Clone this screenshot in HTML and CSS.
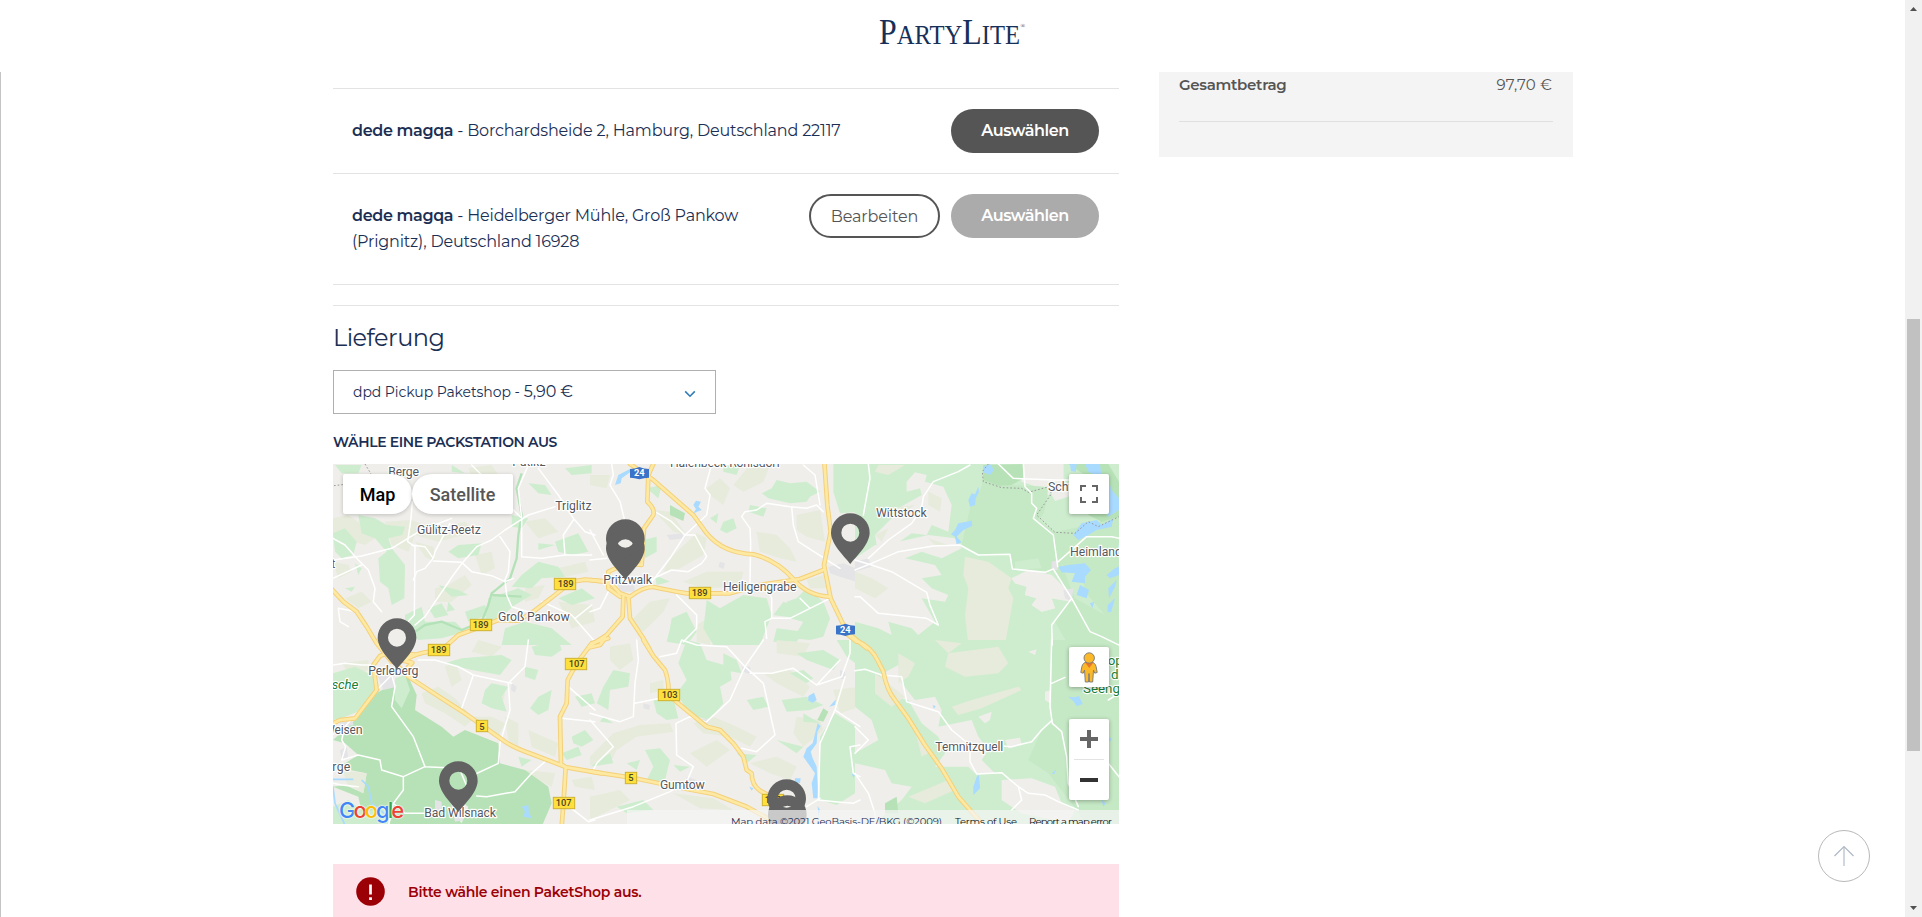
FILE: index.html
```html
<!DOCTYPE html>
<html lang="de">
<head>
<meta charset="utf-8">
<title>PartyLite</title>
<link rel="stylesheet" href="styles.css">
</head>
<body>
<div class="window">
  <div class="page">
    <header class="header">
      <svg class="logo" width="150" height="42" viewBox="0 0 150 42" role="img" aria-label="PartyLite">
        <text x="0" y="34.500" textLength="141" lengthAdjust="spacingAndGlyphs"><tspan class="logo-big">P</tspan><tspan>ARTY</tspan><tspan class="logo-big">L</tspan><tspan>ITE</tspan></text>
        <text class="logo-reg" x="141.500" y="19">®</text>
      </svg>
    </header>
    <div class="content">
      <main class="main">
        <ul class="addresses">
          <li class="address">
            <p class="address-text"><b>dede magqa</b> - Borchardsheide 2, Hamburg, Deutschland 22117</p>
            <button class="btn btn-dark">Auswählen</button>
          </li>
          <li class="address address-tall">
            <p class="address-text"><b>dede magqa</b> - Heidelberger Mühle, Groß Pankow<br>(Prignitz), Deutschland 16928</p>
            <button class="btn btn-outline">Bearbeiten</button>
            <button class="btn btn-muted">Auswählen</button>
          </li>
        </ul>
        <section class="delivery">
          <h2>Lieferung</h2>
          <div class="select">
            <span class="select-name">dpd Pickup Paketshop -</span><span class="select-price">5,90 €</span>
            <svg class="chevron" width="12" height="8" viewBox="0 0 12 8"><path d="M1.2 1.4L6 6.2l4.800-4.800"/></svg>
          </div>
          <h3>WÄHLE EINE PACKSTATION AUS</h3>
          <div class="map">
            <svg class="map-canvas" width="786" height="360" viewBox="0 0 786 360">
              <defs>
                <path id="pin" fill-rule="evenodd" d="M0 0C-12-17-58-58-58-94A58 58 0 0 1 58-94C58-58 12-17 0 0ZM27-94A27 27 0 1 0-27-94A27 27 0 1 0 27-94Z"/>
                <g id="yellow">
                  <g transform="translate(-8 -9) scale(.33333)">
                    <path d="M20 402L55 440L95 470L125 515L155 565L200 620"/>
                    <path d="M200 600L250 605L300 592L350 585L400 540L450 522L520 495L580 497L625 470L690 420L740 380L780 374L850 380"/>
                  </g>
                  <g transform="translate(257 -9) scale(.33333)">
                    <path d="M0 375L60 382L90 415L120 425Q160 395 190 396Q230 405 290 415L420 415L510 390L630 372L700 345"/>
                    <path d="M90 425L55 400L55 350L110 325L155 330L162 220L190 180Q195 160 172 140L175 60L190 27"/>
                    <path d="M120 27L190 75L310 180L350 235Q400 295 490 298Q560 315 610 372Q650 420 715 425"/>
                    <path d="M703 20L712 150L722 230L702 330L722 430L770 530L830 580"/>
                    <path d="M100 425L98 485L50 540L0 572"/>
                    <path d="M115 425L120 490L160 550L180 585"/>
                  </g>
                  <g transform="translate(-8 176) scale(.33333)">
                    <path d="M20 252L45 240L90 235L155 150L145 75L165 48L210 30L270 45"/>
                    <path d="M200 60L250 110L350 175L420 220L540 305Q570 325 620 342L725 382L830 400"/>
                    <path d="M850 -5L800 10L755 70L728 120L725 190L705 230L708 372L722 382L716 480L710 560"/>
                    <path d="M270 45L235 62L262 68L240 92"/>
                  </g>
                  <g transform="translate(257 176) scale(.33333)">
                    <path d="M0 394L130 414L280 445L370 462L470 500L560 550"/>
                    <path d="M160 0L190 48L225 90Q238 125 235 165L295 215L350 260L390 270L430 310L460 350L470 390L485 400Q485 435 510 452L570 485"/>
                    <path d="M0 22L30 15L45 -5"/>
                  </g>
                  <g transform="translate(522 176) scale(.33333)">
                    <path d="M0 0Q50 20 70 65L85 95Q95 150 120 180L160 235L210 315L260 385L310 470L380 550"/>
                    <path d="M-30 -22L5 5"/>
                  </g>
                </g>
              </defs>
              <rect width="786" height="360" class="land"/>

              <!-- north-west -->
              <g transform="translate(-8 -9) scale(.33333)">
                <g class="khaki">
                  <path d="M24 190L70 180L120 215L150 250L120 270L24 240ZM180 200L260 195L330 225L420 200L450 230L340 260L270 240L250 290L200 270ZM270 260L325 275L330 320L300 305ZM430 40L500 30L520 60L450 90ZM600 200L660 190L700 230L640 250ZM640 320L700 340L780 320L790 350L700 370ZM330 400L370 390L420 360L440 390L380 440L330 440ZM450 300L500 290L510 340L470 360ZM24 320L70 330L80 350L40 370ZM600 400L660 390L640 430L600 440ZM700 440L800 450L810 500L740 520ZM60 430L110 410L140 440L100 460Z"/>
                </g>
                <g class="green">
                  <path d="M100 180L150 190L185 210L240 215L232 240L190 250L200 280L240 330L238 430L200 450L190 400L165 380L160 310L185 290L150 250L110 235Z"/>
                  <path d="M24 235L60 220L95 260L85 300L50 310L30 290ZM30 30L110 30L100 55L50 55ZM370 290L400 270L470 265L460 300L400 310ZM380 30L420 55L380 50ZM560 180L610 190L590 220L560 215ZM610 85L660 90L680 120L640 115ZM720 40L800 30L800 55L740 60ZM690 260L760 235L790 290L740 300L700 290ZM340 390L400 405L430 420L380 425ZM310 460L350 445L370 480L330 490ZM370 440L390 465L365 470ZM240 480L290 455L300 500L390 500L420 530L350 550L280 555L240 520ZM590 360L640 320L700 335L720 365L650 370L620 400L560 395ZM490 430L580 400L620 420L570 450L510 500L480 500ZM420 470L480 450L490 480L430 500ZM90 325L110 340L100 360ZM60 400L90 395L80 410ZM540 520L600 500L680 520L740 570L530 570ZM700 430L770 400L810 430L740 450ZM640 265L690 270L640 285Z"/>
                </g>
                <path class="stream" d="M590 55L575 100L590 180L580 240L575 310L555 370L500 415L490 450L470 500L410 525L350 500L300 510L270 530M500 420L590 425"/>
                <path class="boundary" d="M27 92L60 88M120 27L140 60L150 80"/>
              </g>
              <!-- north -->
              <g transform="translate(257 -9) scale(.33333)">
                <g class="khaki">
                  <path d="M190 165L240 170L290 240L250 230ZM250 300L320 235L350 250L340 300L270 340L220 350L240 310ZM350 100L390 70L420 100L400 150L360 120ZM620 180L690 165L705 260L650 245L620 225ZM500 230L560 240L600 280L620 320L570 310L510 290ZM280 380L350 350L460 350L450 395L340 400ZM120 500L180 440L240 430L220 470L160 530ZM0 60L60 60L50 100L0 90ZM480 30L540 30L520 80L460 110L430 90ZM320 510L370 480L360 570L320 560ZM650 375L700 360L710 400L660 400Z"/>
                </g>
                <g class="green">
                  <path d="M545 100L560 75L600 85L650 80L690 110L660 125L650 140L600 145L535 130L515 115ZM480 150L530 160L520 185L475 170ZM400 30L450 30L440 60L400 50ZM160 255L200 245L200 290L165 310ZM400 200L430 190L440 220L410 235L390 225ZM360 190L385 175L380 205ZM730 27L810 27L810 170L750 175L730 110ZM350 435L390 460L460 420L530 430L545 480L510 570L370 570L340 520L345 480ZM245 490L290 470L320 530L290 570L230 560L240 520ZM580 440L650 465L620 490L550 480ZM650 400L700 440L720 490L700 545L660 555L610 550L640 500L600 490L590 440L620 430ZM560 520L640 530L620 560L550 560ZM170 100L215 90L205 130ZM195 360L240 380L200 390Z"/>
                </g>
                <path class="forest" d="M240 150L285 175L280 198L240 180Z"/>
                <path class="water" d="M75 90L85 60L120 42L120 52L95 70L92 85ZM310 150L318 137L333 140L325 155L335 165L310 175L318 162Z"/>
                <path class="town" d="M80 380L130 375L135 410L90 410ZM390 320L405 325L400 342L385 335ZM715 335L760 325L810 345L800 380L750 365L720 355ZM230 240L275 235L285 250L240 255Z"/>
              </g>
              <!-- north-east -->
              <g transform="translate(522 -9) scale(.33333)">
                <path class="green" d="M0 27H792V570H0Z"/>
                <path class="land" d="M155 80L180 52L215 60L210 80L265 95L290 150L280 230L230 210L215 240L170 235L90 290L70 300L60 240L110 190L130 160L200 120L195 100L155 110ZM0 310L60 270L130 260L220 240L300 250L320 280L260 310L200 290L150 310L240 330L260 360L200 370L230 400L280 420L270 440L200 430L240 500L190 540L170 520L100 500L110 540L70 520L0 500ZM500 27H625V80L660 90L650 120L600 140L560 100L500 80ZM470 370L520 345L590 360L630 400L650 440L590 430L600 460L560 470L530 450L545 430L510 420L515 395L480 385ZM400 470L425 475L420 495L402 490Z"/>
                <path class="khaki" d="M330 305L400 320L470 370L460 400L475 430L450 570L340 570L330 480L340 400L325 360ZM70 30L150 30L100 60L60 50ZM0 350L50 370L100 400L60 430L0 400ZM100 160L180 150L120 190ZM220 110L260 130L255 170L220 150ZM60 240L100 220L80 260ZM220 250L280 270L240 270Z"/>
                <path class="park" d="M385 60L460 90L580 95L570 170L550 195L600 230L700 210L792 180V570H640L600 500L650 430L600 350L470 345L465 300L380 300L320 270L345 160L380 95Z"/>
                <path class="green" d="M700 30L792 27V180L700 210L600 230L560 195L585 110L650 90ZM480 320L550 310L560 340L480 345ZM620 330L680 350L690 410L750 480L660 430Z"/>
                <path class="land" d="M470 370L520 345L590 360L630 400L650 440L590 430L600 460L560 470L530 450L545 430L510 420L515 395L480 385ZM500 27H625V80L655 92L640 125L600 138L585 110L575 97L500 80Z"/>
                <path class="forest" d="M385 30L505 27V70L470 90L430 92L385 75ZM640 27H760L792 80V185L740 200L700 180L690 60Z"/>
                <path class="water" d="M385 35L405 27L417 45L405 60L385 52ZM645 27H665L662 50L648 48ZM690 27H735L740 70L700 50ZM735 60L760 75L770 105L792 130V165L760 185L750 130L720 120ZM350 115L360 118L370 95L372 110L362 130L360 150L345 155L340 135ZM310 205L350 197L352 212L325 225L315 235L305 245L320 262L305 268L300 245L288 238L300 225ZM655 240L680 205L725 195L740 210L775 190L770 215L725 225L700 240L670 255ZM610 335L640 330L690 325L708 345L690 365L690 385L650 380L660 355L620 352ZM675 390L702 405L695 430L665 420ZM755 360L780 340L792 335V360L765 370ZM760 400L785 375L780 395L762 430ZM758 450L780 430L768 472L758 470ZM705 445L718 440L712 460Z"/>
                <path class="boundary" d="M400 27L382 50L385 80L440 98L500 100L520 112L575 97L590 115L545 180L600 232L660 235L700 200L730 215L792 185"/>
                <path class="town" d="M0 320L40 310L50 335L0 350ZM590 320L610 315L608 345L590 345ZM625 405L655 400L650 440L630 430Z"/>
              </g>
              <!-- south-west -->
              <g transform="translate(-8 176) scale(.33333)">
                <g class="khaki">
                  <path d="M290 160L340 140L390 175L440 230L500 230L540 250L520 290L440 240L420 260L360 220L300 190ZM50 70L130 60L130 90L80 110ZM540 230L580 250L580 320L550 300ZM390 60L410 120L380 140L360 80ZM610 270L700 310L690 350L620 320ZM600 390L690 400L680 440L620 410ZM740 420L800 410L810 450L750 440ZM500 150L540 160L530 200L490 190ZM460 0L530 20L500 50L440 35Z"/>
                </g>
                <path class="green" d="M24 100L90 80L150 110L165 150L110 210L50 235L24 240ZM360 70L410 55L530 45L560 60L525 105L440 90ZM500 130L550 140L530 170L545 215L500 205L470 190L480 150ZM620 20L700 0L710 30L680 50L630 45ZM640 170L680 150L670 210L640 225L615 205ZM750 170L800 160L810 190L770 200ZM740 290L780 270L805 300L770 320L745 310ZM580 350L620 360L590 380ZM24 500L70 480L110 510L190 500L190 560H24ZM710 340L760 320L770 345L725 360ZM600 80L640 90L630 120L600 110Z"/>
                <path class="forest" d="M180 145L250 110L275 165L270 210L350 260L385 290L420 270L520 310L525 370L600 390L670 440L680 490L650 560H190L210 500L110 515L100 470L24 440V300L90 240L155 160Z"/>
                <path class="land" d="M24 380L125 400L115 460L60 435L24 440ZM24 300L60 310L100 345L60 370L24 370ZM390 470L430 500L410 550L385 520Z"/>
                <path class="khaki" d="M55 392L125 400L115 460L65 430Z"/>
                <path class="green" d="M210 115L240 105L255 150L230 205L210 180Z"/>
                <path class="town" d="M155 100L200 100L215 140L175 150ZM40 240L80 235L85 255L50 262ZM45 330L65 320L70 355L50 360ZM375 480L415 490L415 540L390 545ZM560 130L575 140L570 158L558 150ZM330 480L350 485L350 515L330 505Z"/>
                <path class="water" d="M590 500L610 495L612 520L622 535L595 530L600 515Z"/>
                <path class="canal" d="M24 418H85M24 440L30 490L60 555M110 420L130 440L140 490L190 530"/>
              </g>
              <!-- south -->
              <g transform="translate(257 176) scale(.33333)">
                <g class="khaki">
                  <path d="M0 350L70 280L150 255L240 250L250 275L140 290L80 330L60 370L0 375ZM0 470L90 450L120 480L40 520L0 540ZM60 20L120 10L130 60L90 90L60 60ZM310 250L370 230L440 260L500 290L480 320L420 290L340 280ZM520 100L600 90L660 140L640 170L560 130ZM620 230L690 240L700 270L640 320L610 280ZM480 370L560 350L620 380L600 420L540 400ZM300 340L380 300L420 330L350 380ZM560 0L660 10L640 50L560 40ZM250 460L370 475L430 510L330 505ZM730 150L810 140L810 200L750 220ZM180 130L220 120L220 150L180 160Z"/>
                </g>
                <g class="green">
                  <path d="M290 0L330 10L350 60L420 80L425 120L390 140L400 190L360 240L300 225L260 160L290 120L265 70ZM70 90L120 100L115 140L60 150L55 210L20 190L40 140ZM400 40L440 60L455 100L400 90ZM190 180L250 175L265 235L230 240L200 220ZM470 180L520 170L535 200L490 210ZM575 180L650 170L700 195L660 210L590 215ZM600 100L640 90L670 115L650 130ZM620 40L700 30L750 60L730 90L650 60ZM165 330L210 325L240 360L220 440L170 420L190 380ZM690 290L735 220L800 260L810 450L740 495L690 480ZM0 380L60 340L70 370ZM740 0L810 0V80L770 50ZM640 220L690 250L640 245ZM250 375L300 380L270 395ZM40 230L70 250L30 245ZM560 300L640 320L620 340ZM80 500L160 480L190 510L110 520ZM110 370L150 360L140 390ZM440 340L500 345L470 370Z"/>
                </g>
                <path class="forest" d="M700 205L715 215L700 245L682 240Z"/>
                <path class="water" d="M655 168L672 158L680 180L668 188L655 182ZM738 178L735 195L718 200ZM683 250L692 258L682 275L680 310L662 335L668 355L680 380L685 475L670 475L665 430L675 400L640 350L650 325L668 310ZM478 440L490 445L485 452ZM615 415L632 415L630 430L614 425ZM683 498L690 510L685 530ZM785 400L795 405L790 413Z"/>
                <path class="town" d="M455 80L480 80L485 105L460 95ZM335 235L360 240L345 262ZM750 90L765 95L765 120L750 115ZM290 410L320 420L320 450L290 440ZM160 190L180 195L178 210L160 205Z"/>
              </g>
              <!-- south-east -->
              <g transform="translate(522 176) scale(.33333)">
                <path class="green" d="M0 0H792V560H0Z"/>
                <path class="land" d="M75 105L130 75L140 130L180 180L240 170L260 210L250 260L350 240L370 290L400 330L380 360L420 400L360 400L340 380L240 380L270 340L250 290L200 250L160 180L110 170ZM0 200L50 240L70 300L0 340ZM520 35L545 28L540 45ZM370 230L410 215L405 240L390 250ZM450 300L495 293L500 315L460 325ZM440 420L530 415L600 440L620 490L660 510L640 550L500 520L440 480ZM0 370L90 390L110 430L170 440L140 480L60 550L0 550ZM570 155L588 150L585 190L570 180Z"/>
                <path class="khaki" d="M280 40L430 20L460 70L430 100L330 110L270 80ZM290 200L350 180L490 140L500 150L380 205L310 225ZM130 40L180 70L160 110L130 130ZM60 100L150 170L110 200L60 160ZM160 470L280 420L300 450L210 490ZM240 0L320 10L280 40ZM180 270L220 340L200 350Z"/>
                <path class="park" d="M590 0H792V560H700L650 490L580 400L520 360L560 270L590 250Z"/>
                <path class="forest" d="M90 490L125 470L130 520L90 520Z"/>
                <path class="water" d="M640 170L660 172L672 168L683 192L665 198L655 183ZM365 410L372 405L375 445L355 465L355 440ZM590 402L603 388L598 402ZM760 290L772 298L762 305ZM740 480L752 490L745 500ZM233 196L242 198L237 206Z"/>
              </g>

              <g class="local">
                <g transform="translate(-8 -9) scale(.33333)">
                  <path d="M24 250L60 270L100 315L130 345L150 400L145 440L170 470"/><path d="M24 315L110 303L200 280L290 225L380 190"/><path d="M262 140L258 190L248 260L270 275L268 480L240 510"/><path d="M260 270L300 275L325 310L300 340L275 350L265 375"/><path d="M325 310L330 290L375 205"/><path d="M270 510L300 485L385 360L415 320L455 275L500 255L540 225L610 180L690 155"/><path d="M325 318L410 322L440 350L500 362L540 380L565 370M540 375L545 420L560 455L640 480"/><path d="M525 245L555 290L550 350L540 375"/><path d="M440 30L490 80L560 160L590 190L590 305L650 310L720 300L800 300"/><path d="M640 40L700 120L745 190L780 230L810 240M745 195L715 240L720 300"/><path d="M610 30L580 100L590 190"/><path d="M24 370L110 330M95 470L40 460L45 500L70 515M750 490L800 450M650 440L740 480L810 560"/>
                </g>
                <g transform="translate(257 -9) scale(.33333)">
                  <path d="M65 27L70 60L60 90L90 140L110 220"/><path d="M195 170L245 200L285 240L350 180L360 120L345 100L365 27"/><path d="M170 400L240 310L285 240L315 240L350 305L335 325L295 350L245 345L170 380"/><path d="M480 390L482 260L480 220L455 185L465 170L500 165L530 145L600 155L650 160L680 150L700 170M605 155L610 210L625 260L750 340"/><path d="M640 30L675 60L690 150"/><path d="M260 420L320 480L320 520L280 560M525 385L545 430L545 490L525 500L530 550M545 490L600 490L660 460L720 430M630 430L660 460"/><path d="M0 225L40 300M0 315L50 310M60 400L30 460L0 470"/>
                </g>
                <g transform="translate(522 -9) scale(.33333)">
                  <path d="M40 27L45 70L25 180M345 30L310 50L235 80L205 125L200 160L170 205L100 255L40 310"/><path d="M0 345L50 325L130 290L235 273L315 270L370 300L465 298L472 342L570 352L595 342L650 430L590 510L592 570"/><path d="M0 315L50 330L110 350L215 412L225 450L250 510L215 490L70 475L15 425L0 425"/><path d="M430 27L475 70L600 75L650 75"/><path d="M505 27L510 95L530 115L530 145L545 160L535 190L595 240L608 335M610 320L695 245H770L792 250M650 430L705 530L740 545L792 570"/>
                </g>
                <g transform="translate(-8 176) scale(.33333)">
                  <path d="M200 105L210 140L200 200L265 290L300 380L400 385L445 405L520 370L525 310L555 210L550 130L600 80L610 0"/><path d="M280 60L330 60L400 80L445 105L560 130M445 105L410 205"/><path d="M200 105L155 150L60 260L50 300L62 320L50 360L100 345L165 360L170 390L235 410L300 380M235 410L235 450L205 490L240 520L300 520L360 530M205 490L190 560M455 468L485 470L570 455L620 400L660 365M405 390L430 450M24 75L60 70L110 75L150 75M24 430L50 435L100 440M730 140L810 210M710 235L810 245M720 490L790 545L810 540"/>
                </g>
                <g transform="translate(257 176) scale(.33333)">
                  <path d="M140 0L145 60L135 130L130 230L90 245L0 220M135 190L210 175M0 240L70 320L20 370L10 390"/><path d="M210 50L260 40L275 0L320 15L410 20L465 80L520 130L555 285L500 335L455 325"/><path d="M520 0L465 80L420 180L350 245M345 245L300 230L258 250L260 345L310 380L290 425L240 455L130 500L0 540"/><path d="M480 100L545 100L610 85L680 135L755 110L780 40V0M680 135L750 60M765 110L735 210L690 310L685 480L735 485L790 490L810 480M735 210L810 260M810 315L780 320L790 400L810 410M650 500L690 475"/>
                </g>
                <g transform="translate(522 176) scale(.33333)">
                  <path d="M0 92L30 88L80 105L140 110L155 185L250 215L290 270L345 315V365L365 402L440 398L490 440L520 460L570 465L610 485L670 510"/><path d="M590 0L585 200L592 250L620 275L635 350L640 430L670 500M592 240L560 270L530 305L470 320L400 315M590 130L630 112M760 180L792 160M0 260L40 300L0 340M0 400L40 460L60 520V560M740 345L792 410M490 440L500 480L470 510"/>
                </g>
              </g>
              <use href="#yellow" class="road-case"/>
              <use href="#yellow" class="road-fill"/>

              <g class="labels">
                <g transform="translate(-8 -9) scale(.33333)">
                  <text x="190" y="64" textLength="92">Berge</text><text x="562" y="32" textLength="100">Putlitz</text><text x="691" y="166" textLength="109">Triglitz</text><text x="276" y="238" textLength="192">Gülitz-Reetz</text><text x="519" y="498" textLength="215">Groß Pankow</text><text x="19" y="340">t</text>
                </g>
                <g transform="translate(257 -9) scale(.33333)">
                  <text x="240" y="36" textLength="332">Halenbeck-Rohlsdorf</text><text x="40" y="388" textLength="146">Pritzwalk</text><text x="399" y="409" textLength="221">Heiligengrabe</text>
                </g>
                <g transform="translate(522 -9) scale(.33333)">
                  <text x="63" y="186" textLength="152">Wittstock</text><text x="579" y="108">Schwarz</text><text x="645" y="304" textLength="156">Heimland</text>
                </g>
                <g transform="translate(-8 176) scale(.33333)">
                  <text x="130" y="105" textLength="150">Perleberg</text><text x="-3" y="282" textLength="116">Weisen</text><text x="22" y="393" textLength="54">rge</text><text x="298" y="531" textLength="215">Bad Wilsnack</text><text x="20" y="146" class="nature italic" textLength="80">sche</text>
                </g>
                <g transform="translate(257 176) scale(.33333)">
                  <text x="210" y="447" textLength="134">Gumtow</text>
                </g>
                <g transform="translate(522 176) scale(.33333)">
                  <text x="241" y="333" textLength="204">Temnitzquell</text><text class="nature" x="758" y="75">op</text><text class="nature" x="768" y="117">d</text><text class="nature" x="684" y="158">Seeng</text>
                </g>
              </g>

              <g class="shields">
                <g transform="translate(-8 -9) scale(.33333)">
                  <rect x="688" y="370" width="64" height="34"/><text x="722" y="397">189</text>
                  <rect x="436" y="493" width="64" height="34"/><text x="467" y="520">189</text>
                </g>
                <g transform="translate(257 -9) scale(.33333)">
                  <rect x="298" y="397" width="64" height="34"/><text x="329" y="424">189</text>
                  <path class="motorway" d="M120 42Q134 42 148 36Q162 42 177 42V68Q162 68 148 73Q134 68 120 68Z"/><text class="mw-text" x="148" y="64">24</text>
                  <path class="motorway" d="M738 512Q752 512 766 506Q780 512 795 512V538Q780 538 766 543Q752 538 738 538Z"/><text class="mw-text" x="766" y="534">24</text>
                </g>
                <g transform="translate(-8 176) scale(.33333)">
                  <rect x="310" y="13" width="64" height="34"/><text x="341" y="40">189</text>
                  <rect x="721" y="55" width="64" height="34"/><text x="755" y="82">107</text>
                  <rect x="454" y="241" width="34" height="34"/><text x="471" y="269">5</text>
                  <rect x="685" y="472" width="64" height="34"/><text x="716" y="499">107</text>
                </g>
                <g transform="translate(257 176) scale(.33333)">
                  <rect x="205" y="148" width="64" height="34"/><text x="239" y="175">103</text>
                  <rect x="106" y="397" width="34" height="34"/><text x="123" y="424">5</text>
                  <rect x="517" y="463" width="64" height="34"/><text x="548" y="490">107</text>
                </g>
              </g>

              <g class="pins">
                <g transform="translate(257 -9) scale(.33333)"><use href="#pin" x="106" y="345"/><use href="#pin" x="106" y="374"/><use href="#pin" x="781" y="327"/></g>
                <g transform="translate(-8 176) scale(.33333)"><use href="#pin" x="216" y="87"/><use href="#pin" x="400" y="516"/></g>
                <g transform="translate(257 176) scale(.33333)"><use href="#pin" x="590" y="570"/><use href="#pin" x="592" y="618"/></g>
              </g>
            </svg>
            <div class="google"><span class="g-b">G</span><span class="g-r">o</span><span class="g-y">o</span><span class="g-b">g</span><span class="g-g">l</span><span class="g-r">e</span></div>
            <div class="map-type"><button class="type-map">Map</button><button class="type-sat">Satellite</button></div>
            <button class="ctl ctl-full"><svg width="18" height="18" viewBox="0 0 18 18"><path d="M0 0v6h2V2h4V0zM12 0v2h4v4h2V0zM0 12v6h6v-2H2v-4zM16 12v4h-4v2h6v-6z" fill="#666"/></svg></button>
            <button class="ctl ctl-peg"><svg width="18" height="31" viewBox="0 0 18 31"><path d="M5 10.500C2.500 11.500 2 14 1.600 16L.8 20.500l2.400.7 1.300-3 .8 11.800h3.200l.5-8.500.5 8.500h3.200l.8-11.800 1.300 3 2.400-.7-.8-4.500C16 14 15.500 11.500 13 10.500z" fill="#fbb929" stroke="#777" stroke-width=".9"/><path d="M5 10.500h8.500L9.200 16z" fill="#e8772e"/><circle cx="9.200" cy="6" r="5.200" fill="#fbb929" stroke="#777" stroke-width=".9"/></svg></button>
            <div class="zoom">
              <button><svg width="18" height="18" viewBox="0 0 18 18"><path d="M7 0h4v7h7v4h-7v7H7v-7H0V7h7z" fill="#666"/></svg></button>
              <i></i>
              <button><svg width="18" height="4" viewBox="0 0 18 4"><path d="M0 0h18v4H0z" fill="#333"/></svg></button>
            </div>
            <svg class="legal" width="492" height="14" viewBox="0 0 492 14">
              <rect width="492" height="14" fill="#f5f5f5" opacity=".7"/>
              <text x="104" y="15" textLength="211" fill="#1c2f55">Map data ©2021 GeoBasis-DE/BKG (©2009)</text>
              <text x="328" y="15" textLength="62" fill="#111">Terms of Use</text>
              <text x="402" y="15" textLength="83" fill="#111">Report a map error</text>
            </svg>
          </div>
          <div class="alert">
            <svg width="29" height="29" viewBox="0 0 29 29"><circle cx="14.500" cy="14.500" r="14.300" fill="#9b0006"/><path d="M14.500 7.500v10" stroke="#fff" stroke-width="2.700" fill="none"/><path d="M13.100 20.300h2.800V23h-2.800z" fill="#fff"/></svg>
            <span>Bitte wähle einen PaketShop aus.</span>
          </div>
        </section>
      </main>
      <aside class="summary">
        <div class="summary-row"><b>Gesamtbetrag</b><span>97,70 €</span></div>
      </aside>
    </div>
    <button class="to-top"><svg width="54" height="54" viewBox="0 0 54 54"><circle cx="27" cy="27" r="25.500" fill="none" stroke="#b9b9b9"/><path d="M27 18v19" stroke="#d0d7df" stroke-width="2"/><path d="M17.500 27L27 17.500 36.500 27" fill="none" stroke="#aeb8c5" stroke-width="1.200"/></svg></button>
  </div>
  <div class="scrollbar">
    <svg width="17" height="17" viewBox="0 0 17 17"><path d="M5 11h7L8.500 7z" fill="#505050"/></svg>
    <div class="thumb"></div>
    <svg class="down" width="17" height="17" viewBox="0 0 17 17"><path d="M5 6h7l-3.500 4z" fill="#505050"/></svg>
  </div>
</div>
</body>
</html>
```
FILE: styles.css
```css
* { box-sizing: border-box; }
body { margin: 0; background: #fff; font-family: Montserrat, Inter, "Open Sans", sans-serif; color: #1b2f54; }
h2, h3, p, ul { margin: 0; padding: 0; font-weight: 400; }
button { font: inherit; border: 0; padding: 0; background: none; }
svg { display: block; }

.window { display: flex; width: 1922px; height: 917px; overflow: hidden; }
.page { position: relative; width: 1905px; height: 917px; overflow: hidden; }
.header { height: 72px; padding: 9px 0 0 879px; background: #fff; }
.logo { font-family: "Liberation Serif", serif; font-size: 27px; fill: #17305a; }
.logo-big { font-size: 35px; }
.logo-reg { font-size: 6px; }

.content { display: flex; align-items: flex-start; gap: 40px; height: 845px; padding-left: 332px; border-left: 1px solid #c4c4c4; }
.main { width: 786px; padding-top: 16px; }
.addresses { list-style: none; border-top: 1px solid #e3e3e3; }
.address { display: flex; height: 85px; padding: 20px 20px 0 19px; border-bottom: 1px solid #e3e3e3; }
.address-tall { height: 111px; }
.address-text { flex: 1; padding-top: 9px; font-size: 16px; line-height: 26px; white-space: nowrap; letter-spacing: -.17px; }
.address-text b { font-weight: 600; letter-spacing: -.35px; }
.btn { height: 44px; border-radius: 22px; font-size: 16px; text-align: center; }
.btn-dark, .btn-muted { width: 148px; color: #fff; font-weight: 600; letter-spacing: -.45px; padding-bottom: 1px; }
.btn-dark { background: #555; }
.btn-muted { background: #ababab; }
.btn-outline { width: 131px; margin-right: 11px; border: 2px solid #555; color: #555; letter-spacing: -.1px; }

.delivery { margin-top: 20px; border-top: 1px solid #e3e3e3; }
.delivery h2 { padding-top: 14px; height: 64px; font-size: 24px; line-height: 36px; letter-spacing: -.5px; }
.select { display: flex; align-items: center; width: 383px; height: 44px; padding: 0 19px 1px; border: 1px solid #b0b0b0; font-size: 14px; letter-spacing: -.08px; }
.select-price { margin-left: 4px; font-size: 16px; }
.chevron { margin: 4px 0 0 auto; fill: none; stroke: #2f7cb8; stroke-width: 1.600; }
.delivery h3 { height: 50px; padding-top: 18px; font-size: 14px; line-height: 20px; font-weight: 600; letter-spacing: -.38px; }

.map { position: relative; height: 360px; overflow: hidden; font-family: Roboto, sans-serif; }
.land { fill: #efeeea; }
.khaki { fill: #e6ebdb; }
.green { fill: #ceedce; }
.park { fill: #c5e8c5; }
.forest { fill: #b7e2b7; }
.water { fill: #a9daff; }
.town { fill: #e4e4e7; }
.stream { fill: none; stroke: #b4e2b8; stroke-width: 7; stroke-linejoin: round; }
.canal { fill: none; stroke: #a9daff; stroke-width: 5; }
.boundary { fill: none; stroke: #999; stroke-width: 3; stroke-dasharray: 5 6; }
.local { fill: none; stroke: #fff; stroke-width: 4.500; stroke-linejoin: round; stroke-linecap: round; }
.road-case { fill: none; stroke: #f4d07a; stroke-width: 14; stroke-linejoin: round; stroke-linecap: round; }
.road-fill { fill: none; stroke: #fee9a3; stroke-width: 8; stroke-linejoin: round; stroke-linecap: round; }
.labels { font-size: 37px; fill: #55585e; stroke: #fff; stroke-width: 7; stroke-linejoin: round; paint-order: stroke; }
.labels .nature { fill: #188038; font-size: 40px; }
.labels .italic { font-style: italic; }
.shields { font-size: 28px; font-weight: 500; text-anchor: middle; fill: #4c4524; }
.shields rect { fill: #fedf3c; stroke: #cfb22e; stroke-width: 3; }
.shields .motorway { fill: #3b73c8; }
.shields .mw-text { fill: #fff; font-weight: 700; }
.pins { fill: #626262; }

.google { position: absolute; left: 6px; top: 333px; font: 500 22px/26px Inter, sans-serif; letter-spacing: -2px; text-shadow: 0 0 2px #fff, 0 0 2px #fff; }
.g-b { color: #4285f4; }
.g-r { color: #ea4335; }
.g-y { color: #fbbc05; }
.g-g { color: #34a853; }
.map-type { position: absolute; left: 10px; top: 10px; display: flex; height: 40px; font-size: 18px; }
.map-type button { height: 40px; background: #fff; box-shadow: 0 1px 4px rgba(0, 0, 0, .2); }
.type-map { width: 69px; border-radius: 2px 20px 20px 2px; color: #000; font-weight: 500; }
.type-sat { width: 101px; border-radius: 20px 2px 2px 20px; color: #565656; font-weight: 500; }
.ctl { position: absolute; right: 10px; display: grid; place-items: center; width: 40px; height: 40px; border-radius: 2px; background: #fff; box-shadow: 0 1px 4px rgba(0, 0, 0, .3); }
.ctl-full { top: 10px; }
.ctl-peg { top: 183px; }
.zoom { position: absolute; right: 10px; top: 255px; width: 40px; height: 81px; border-radius: 2px; background: #fff; box-shadow: 0 1px 4px rgba(0, 0, 0, .3); }
.zoom button { display: grid; place-items: center; width: 40px; height: 40px; }
.zoom i { display: block; width: 30px; height: 1px; margin: 0 auto; background: #e3e3e3; }
.legal { position: absolute; right: 0; bottom: 0; font: 10px Montserrat, Inter, sans-serif; }

.alert { display: flex; gap: 23px; margin-top: 40px; height: 80px; padding: 13px 23px; background: #fee0e8; color: #9b0006; font-size: 14px; line-height: 31px; font-weight: 600; letter-spacing: -.26px; }

.summary { width: 414px; height: 85px; padding: 0 20px; background: #f4f4f4; color: #555; }
.summary-row { display: flex; justify-content: space-between; height: 50px; border-bottom: 1px solid #e0e0e0; font-size: 15px; line-height: 26px; }
.summary-row b { font-weight: 600; letter-spacing: -.3px; }
.summary-row span { padding-right: 1px; letter-spacing: .15px; }

.to-top { position: absolute; left: 1817px; top: 829px; }
.scrollbar { display: flex; flex-direction: column; align-items: center; width: 17px; height: 917px; background: #f1f1f1; }
.thumb { width: 13px; height: 432px; margin-top: 302px; background: #c1c1c1; }
.scrollbar .down { margin-top: auto; }
```
